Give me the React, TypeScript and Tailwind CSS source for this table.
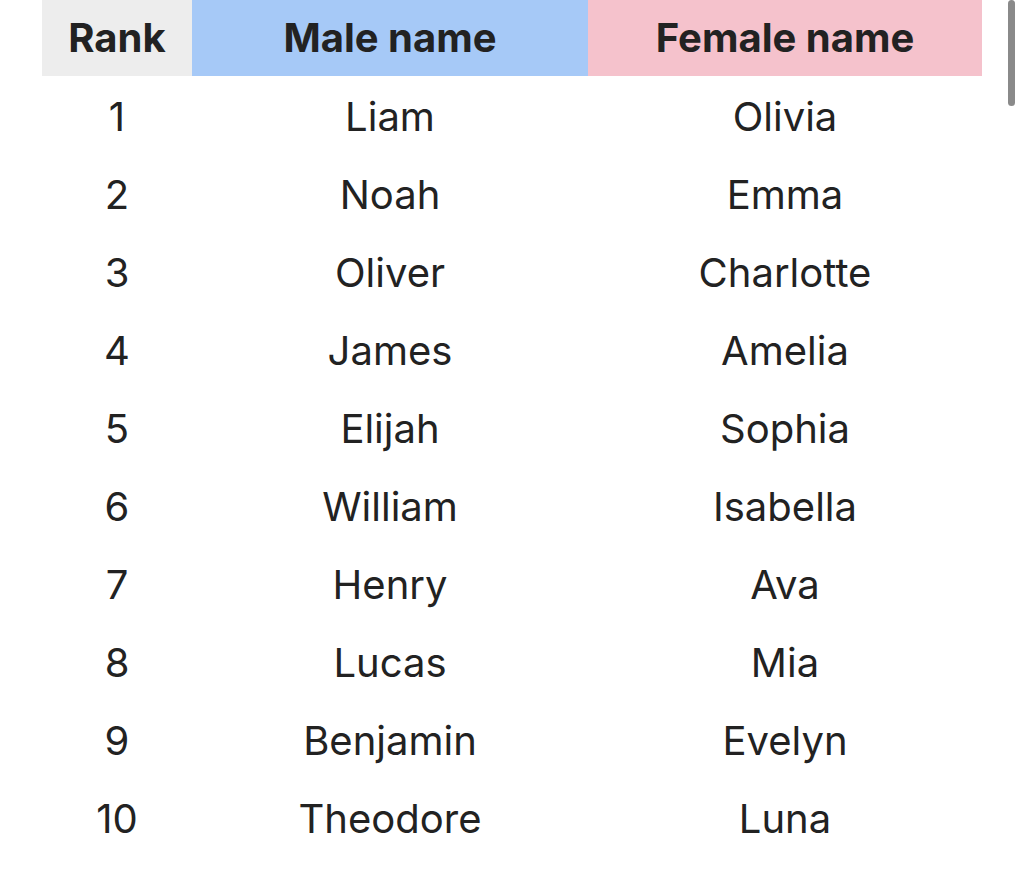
const rows = [
  ["Liam", "Olivia"],
  ["Noah", "Emma"],
  ["Oliver", "Charlotte"],
  ["James", "Amelia"],
  ["Elijah", "Sophia"],
  ["William", "Isabella"],
  ["Henry", "Ava"],
  ["Lucas", "Mia"],
  ["Benjamin", "Evelyn"],
  ["Theodore", "Luna"],
];

export default function App() {
  return (
    <div
      className="relative h-[873px] w-[1024px] overflow-hidden bg-white text-[#222222]"
      style={{ fontFamily: "Inter, 'Noto Sans', sans-serif" }}
    >
      <div className="pl-[42px]">
        <div className="flex h-[76px] w-[940px] items-center text-[40px] font-bold">
          <div className="flex h-full w-[150px] items-center justify-center bg-[#ededed]">Rank</div>
          <div className="flex h-full w-[396px] items-center justify-center bg-[#a6c9f7]">Male name</div>
          <div className="flex h-full w-[394px] items-center justify-center bg-[#f5c2cc]">Female name</div>
        </div>
        <div className="pt-[2px]">
          {rows.map(([male, female], i) => (
            <div key={male} className="flex h-[78px] w-[940px] items-center text-[40px]">
              <div className="w-[150px] text-center">{i + 1}</div>
              <div className="w-[396px] text-center">{male}</div>
              <div className="w-[394px] text-center">{female}</div>
            </div>
          ))}
        </div>
      </div>
      {/* scrollbar */}
      <div className="absolute right-[9px] top-0 h-[106px] w-[7px] rounded-full bg-[#8a8a8a]" />
    </div>
  );
}
